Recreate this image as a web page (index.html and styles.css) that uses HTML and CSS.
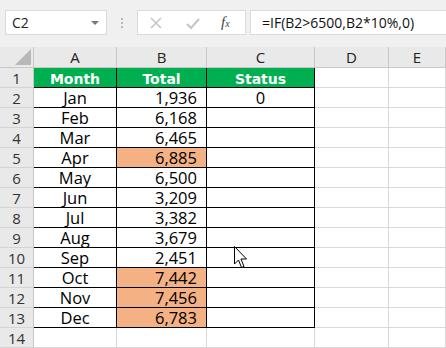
FILE: index.html
```html
<!DOCTYPE html>
<html>
<head>
<meta charset="utf-8">
<link rel="stylesheet" href="styles.css">
</head>
<body>
<div class="app">
  <div class="toolbar">
    <div class="namebox"><span class="ref">C2</span><span class="caret"></span></div>
    <div class="sep"><span></span><span></span><span></span></div>
    <div class="btnbox">
      <svg class="ico x" width="14" height="14" viewBox="0 0 14 14"><path d="M2 2 L12 12 M12 2 L2 12" stroke="#c4c4c4" stroke-width="1.5" fill="none"/></svg>
      <svg class="ico ok" width="16" height="14" viewBox="0 0 16 14"><path d="M2 8 L6 12 L14 3" stroke="#c4c4c4" stroke-width="2" fill="none"/></svg>
      <span class="fx">f<sub>x</sub></span>
    </div>
    <div class="formula">=IF(B2&gt;6500,B2*10%,0)</div>
  </div>
  <div class="grid">
    <div class="corner"><span class="tri"></span></div>
    <div class="ch">A</div><div class="ch">B</div><div class="ch">C</div><div class="ch">D</div><div class="ch">E</div>

    <div class="rh">1</div><div class="c t hd">Month</div><div class="c t hd">Total</div><div class="c t hd tr">Status</div><div class="c"></div><div class="c"></div>
    <div class="rh">2</div><div class="c t ctr">Jan</div><div class="c t num">1,936</div><div class="c t ctr tr">0</div><div class="c"></div><div class="c"></div>
    <div class="rh">3</div><div class="c t ctr">Feb</div><div class="c t num">6,168</div><div class="c t tr"></div><div class="c"></div><div class="c"></div>
    <div class="rh">4</div><div class="c t ctr">Mar</div><div class="c t num">6,465</div><div class="c t tr"></div><div class="c"></div><div class="c"></div>
    <div class="rh">5</div><div class="c t ctr">Apr</div><div class="c t num hi">6,885</div><div class="c t tr"></div><div class="c"></div><div class="c"></div>
    <div class="rh">6</div><div class="c t ctr">May</div><div class="c t num">6,500</div><div class="c t tr"></div><div class="c"></div><div class="c"></div>
    <div class="rh">7</div><div class="c t ctr">Jun</div><div class="c t num">3,209</div><div class="c t tr"></div><div class="c"></div><div class="c"></div>
    <div class="rh">8</div><div class="c t ctr">Jul</div><div class="c t num">3,382</div><div class="c t tr"></div><div class="c"></div><div class="c"></div>
    <div class="rh">9</div><div class="c t ctr">Aug</div><div class="c t num">3,679</div><div class="c t tr"></div><div class="c"></div><div class="c"></div>
    <div class="rh">10</div><div class="c t ctr">Sep</div><div class="c t num">2,451</div><div class="c t tr"></div><div class="c"></div><div class="c"></div>
    <div class="rh">11</div><div class="c t ctr">Oct</div><div class="c t num hi">7,442</div><div class="c t tr"></div><div class="c"></div><div class="c"></div>
    <div class="rh">12</div><div class="c t ctr">Nov</div><div class="c t num hi">7,456</div><div class="c t tr"></div><div class="c"></div><div class="c"></div>
    <div class="rh">13</div><div class="c t ctr">Dec</div><div class="c t num hi">6,783</div><div class="c t tr"></div><div class="c"></div><div class="c"></div>
    <div class="rh">14</div><div class="c"></div><div class="c"></div><div class="c"></div><div class="c"></div><div class="c"></div>
  </div>
  <svg class="cursor" width="14" height="24" viewBox="0 0 14 24"><path d="M0.5 0.5 L0.5 18 L4.5 14 L7.5 21.5 L10 20.5 L7 13 L12.5 13 Z" fill="#fff" stroke="#000" stroke-width="1"/></svg>
</div>
</body>
</html>
```
FILE: styles.css
```css
* { box-sizing: border-box; }
html, body { margin: 0; padding: 0; background: #fff; }
.app { position: relative; width: 446px; height: 348px; overflow: hidden; font-family: "Open Sans", "Noto Sans", sans-serif; }

.toolbar { height: 47px; background: #f0f0f0; display: flex; align-items: flex-start; padding: 10px 0 0 5px; }
.namebox { width: 102px; height: 25px; background: #fff; border: 1px solid #dadada; display: flex; align-items: center; justify-content: space-between; padding: 0 7px 0 6px; }
.ref { font-size: 14px; color: #222; }
.caret { width: 0; height: 0; border-left: 4px solid transparent; border-right: 4px solid transparent; border-top: 4px solid #777; }
.sep { width: 30px; height: 25px; display: flex; flex-direction: column; align-items: center; justify-content: center; gap: 2px; }
.sep span { width: 2px; height: 2px; background: #b8b8b8; }
.btnbox { width: 109px; height: 25px; background: #fff; border: 1px solid #dadada; display: flex; align-items: center; padding-left: 11px; }
.ico.x { margin-right: 22px; }
.ico.ok { margin-right: 20px; }
.fx { font-family: "Liberation Serif", serif; font-style: italic; font-size: 15px; color: #444; line-height: 1; }
.fx sub { font-size: 10px; vertical-align: baseline; }
.formula { flex: 1; height: 25px; margin-left: 4px; background: #fff; border: 1px solid #dadada; border-right: none; font-size: 14px; color: #111; line-height: 23px; padding-left: 11px; }

.grid { display: grid; grid-template-columns: 34px 83px 90px 108px 74px 1fr; grid-template-rows: 21px repeat(14, 20px); }
.corner { background: #e9e9e9; border-right: 1px solid #c8c8c8; border-bottom: 1px solid #c8c8c8; position: relative; }
.tri { position: absolute; right: 2px; bottom: 2px; width: 0; height: 0; border-left: 16px solid transparent; border-bottom: 16px solid #b8b8b8; }
.ch { background: #e9e9e9; border-right: 1px solid #c8c8c8; border-bottom: 1px solid #c8c8c8; text-align: center; font-size: 15px; line-height: 20px; color: #222; }
.rh { background: #e9e9e9; border-right: 1px solid #c8c8c8; border-bottom: 1px solid #d4d4d4; text-align: center; font-size: 15px; line-height: 20px; color: #333; }
.c { border-right: 1px solid #d9d9d9; border-bottom: 1px solid #d9d9d9; font-size: 16.5px; line-height: 20px; color: #000; white-space: nowrap; }
.c.t { border-right-color: #000; border-bottom-color: #000; }
.hd { background: #00b050; color: #fff; font-family: "DejaVu Sans", sans-serif; font-weight: bold; font-size: 14px; text-align: center; line-height: 20px; padding-top: 1px; }
.ctr { text-align: center; }
.num { text-align: right; padding-right: 9px; }
.hi { background: #f4b183; }

.cursor { position: absolute; left: 234px; top: 246px; }
```
